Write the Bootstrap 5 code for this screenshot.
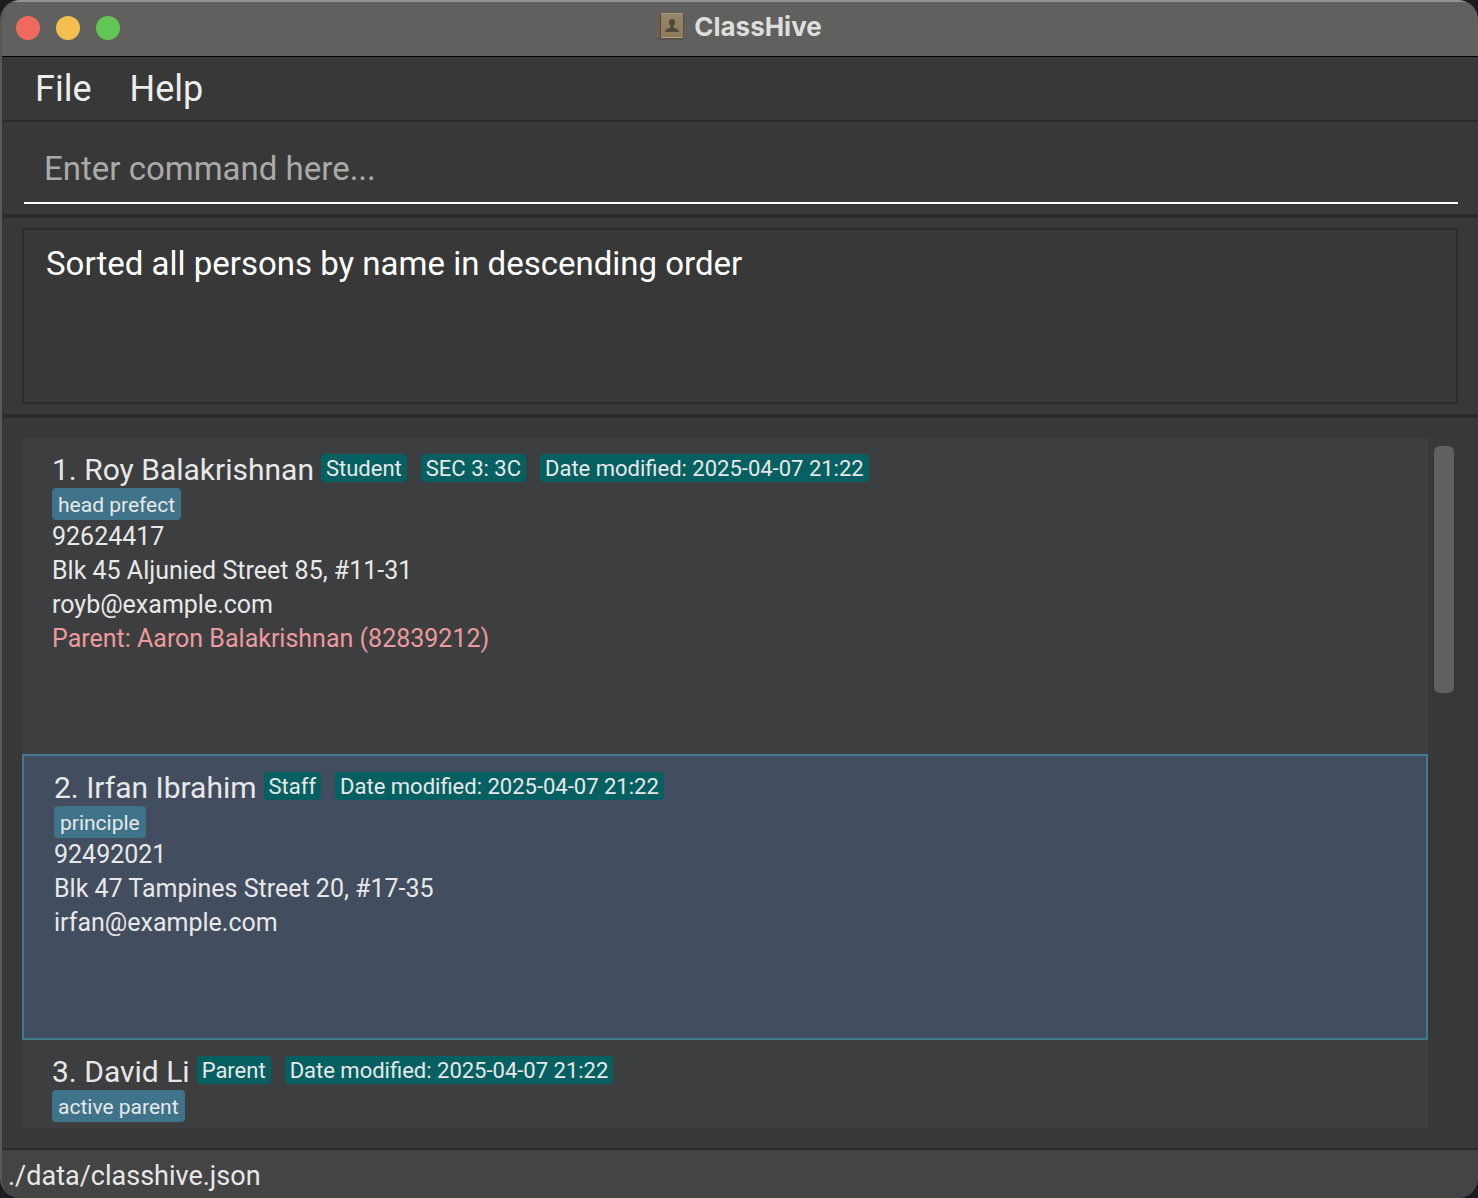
<!DOCTYPE html>
<html lang="en">
<head>
<meta charset="utf-8">
<meta name="viewport" content="width=device-width, initial-scale=1">
<title>ClassHive</title>
<link rel="stylesheet" href="https://cdn.jsdelivr.net/npm/bootstrap@5.3.0/dist/css/bootstrap.min.css">
<style>
  body { background: #1b1b20; font-family: Roboto, Inter, "Liberation Sans", sans-serif; font-weight: 400; color: #e8e8e8; }
  .app-window { background: #383838; border-radius: 20px; border-left: 2px solid #585858; }
  .title-bar { background: #60605e; border-top: 2px solid #929290; border-bottom: 1px solid #000; height: 57px; margin-left: -2px; }
  .lights { left: 16px; top: 14px; gap: 16px; }
  .light { width: 24px; height: 24px; border: 0; border-radius: 50%; padding: 0; }
  .light-close { background: #ee6a5f; }
  .light-min { background: #f5bf4f; }
  .light-max { background: #62c655; }
  .app-title { font-family: Inter, sans-serif; font-size: 26px; line-height: 34px; font-weight: 700; color: #dededd; }
  .menu-strip { height: 65px; border-bottom: 2px solid #2b2b2b; padding: 0 14px; }
  .menu-item { background: none; border: 0; padding: 0 19px; font-size: 36px; line-height: 64px; color: #ededed; }
  .command-pane { padding: 12px 20px 10px 22px; border-bottom: 4px solid #2b2b2b; }
  .command-box { height: 70px; padding: 0 20px; border: 0; border-bottom: 2px solid #fff; border-radius: 0; font-size: 33px; }
  .command-box, .command-box:focus { background: transparent; color: #fff; box-shadow: none; }
  .command-box::placeholder { color: #aaa; opacity: 1; }
  .result-pane { padding: 10px 20px; border-bottom: 4px solid #2b2b2b; }
  .result-box { height: 176px; padding: 14px 22px; border: 2px solid #2b2b2b; border-radius: 0; resize: none; font-size: 33px; line-height: 40px; }
  .result-box, .result-box:focus { background: transparent; color: #fff; box-shadow: none; }
  .list-pane { padding: 20px 24px 20px 20px; gap: 6px; min-height: 0; }
  .person { background: #3c3e3f; padding: 14px 30px 98px; font-size: 25px; line-height: 34px; }
  .person.selected { background: #424d5f; border: 2px solid #3e7b91; }
  .person-name { font-size: 30px; line-height: 36px; font-weight: 400; margin: 0; }
  .heading-row { height: 36px; }
  .info-chip { background: #066061; border-radius: 4px; font-size: 22px; height: 28px; line-height: 30px; padding: 0 5px; margin-top: 2px; }
  .info-chips { gap: 14px; margin-left: 7px; }
  .tag-chip { background: #3e7389; border-radius: 4px; font-size: 21px; height: 32px; line-height: 34px; padding: 0 6px; }
  .parent-link { color: #ec9a9d; }
  .scroll-track { width: 20px; padding-top: 8px; }
  .scroll-thumb { height: 247px; border-radius: 6px; background: #606060; }
  .status-strip { height: 50px; background: #444; border-top: 2px solid #2b2b2b; padding: 0 6px; font-size: 27px; line-height: 52px; }
</style>
</head>
<body>
<div class="app-window vh-100 d-flex flex-column overflow-hidden">
  <header class="title-bar position-relative flex-shrink-0 d-flex justify-content-center align-items-start pt-2">
    <div class="lights position-absolute d-flex">
      <button type="button" class="light light-close" aria-label="Close"></button>
      <button type="button" class="light light-min" aria-label="Minimize"></button>
      <button type="button" class="light light-max" aria-label="Zoom"></button>
    </div>
    <div class="d-flex align-items-center gap-2">
      <svg width="30" height="30" viewBox="0 0 30 30" aria-hidden="true">
        <defs><linearGradient id="cover" x1="0" y1="0" x2="0" y2="1"><stop offset="0" stop-color="#978769"/><stop offset="1" stop-color="#8e7a55"/></linearGradient></defs>
        <rect x="0" y="2" width="28" height="26" rx="2" fill="#56524d"/>
        <rect x="0" y="2" width="5" height="24" fill="#6a6156"/>
        <path d="M4.500 2V26" stroke="#4f4a44"/>
        <rect x="5" y="1" width="22" height="25" fill="url(#cover)"/>
        <path d="M5 1.500H27" stroke="#a99b80"/>
        <path d="M5 25.500H27" stroke="#b0a07c"/>
        <path d="M16 7c-2.300 0-3.200 1.600-3.100 3.500.1 1.600.7 2.700 1.500 3.500v1.600c-2.400.9-5 1.300-5.300 4.400h13.800c-.3-3.100-2.900-3.500-5.300-4.400V14c.8-.8 1.400-1.900 1.500-3.500.1-1.900-.8-3.500-3.100-3.500z" fill="#4f4a40"/>
      </svg>
      <span class="app-title">ClassHive</span>
    </div>
  </header>

  <nav class="menu-strip d-flex flex-shrink-0 align-items-start" aria-label="Main menu">
    <button type="button" class="menu-item">File</button>
    <button type="button" class="menu-item">Help</button>
  </nav>

  <div class="command-pane">
    <input type="text" class="command-box form-control" placeholder="Enter command here..." aria-label="Command">
  </div>

  <div class="result-pane">
    <textarea class="result-box form-control d-block" readonly aria-label="Result">Sorted all persons by name in descending order</textarea>
  </div>

  <main class="list-pane d-flex flex-grow-1">
    <div class="flex-grow-1 overflow-hidden">
      <article class="person">
        <div class="heading-row d-flex align-items-start">
          <h2 class="person-name">1. Roy Balakrishnan</h2>
          <div class="info-chips d-flex"><span class="info-chip">Student</span><span class="info-chip">SEC 3: 3C</span><span class="info-chip">Date modified: 2025-04-07 21:22</span></div>
        </div>
        <div class="d-flex"><span class="tag-chip">head prefect</span></div>
        <div>92624417</div>
        <div>Blk 45 Aljunied Street 85, #11-31</div>
        <div>royb@example.com</div>
        <div class="parent-link">Parent: Aaron Balakrishnan (82839212)</div>
      </article>
      <article class="person selected">
        <div class="heading-row d-flex align-items-start">
          <h2 class="person-name">2. Irfan Ibrahim</h2>
          <div class="info-chips d-flex"><span class="info-chip">Staff</span><span class="info-chip">Date modified: 2025-04-07 21:22</span></div>
        </div>
        <div class="d-flex"><span class="tag-chip">principle</span></div>
        <div>92492021</div>
        <div>Blk 47 Tampines Street 20, #17-35</div>
        <div>irfan@example.com</div>
      </article>
      <article class="person">
        <div class="heading-row d-flex align-items-start">
          <h2 class="person-name">3. David Li</h2>
          <div class="info-chips d-flex"><span class="info-chip">Parent</span><span class="info-chip">Date modified: 2025-04-07 21:22</span></div>
        </div>
        <div class="d-flex"><span class="tag-chip">active parent</span></div>
      </article>
    </div>
    <div class="scroll-track flex-shrink-0"><div class="scroll-thumb"></div></div>
  </main>

  <footer class="status-strip flex-shrink-0">./data/classhive.json</footer>
</div>
<script src="https://cdn.jsdelivr.net/npm/bootstrap@5.3.0/dist/js/bootstrap.bundle.min.js"></script>
</body>
</html>
